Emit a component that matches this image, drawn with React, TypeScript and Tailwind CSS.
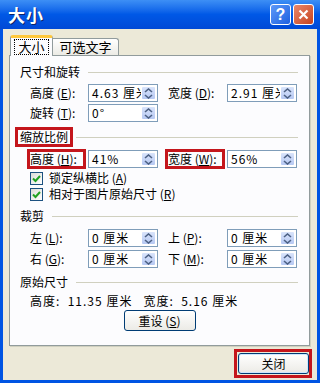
import type { ReactNode } from 'react'

const font = "font-['SimSun','Noto_Sans_CJK_SC',sans-serif]"

function Spin() {
  return (
    <div className="w-[15px] h-full rounded-[2px] border border-white bg-linear-to-b from-[#d9e4fb] to-[#b6c8f3] flex flex-col items-center justify-center gap-[1px]">
      <svg width="9" height="5" viewBox="0 0 9 5">
        <path d="M1 4 L4.5 1 L8 4" fill="none" stroke="#4d6185" strokeWidth="1.6" />
      </svg>
      <svg width="9" height="5" viewBox="0 0 9 5">
        <path d="M1 1 L4.5 4 L8 1" fill="none" stroke="#4d6185" strokeWidth="1.6" />
      </svg>
    </div>
  )
}

function Field({ value }: { value: string }) {
  return (
    <div className="w-[70px] h-[18px] border border-[#7f9db9] bg-white flex items-stretch p-[1px]">
      <div className="flex-1 min-w-0 overflow-hidden whitespace-pre pl-[2px] text-[12px] leading-[14px] tracking-[1px] text-black">
        {value}
      </div>
      <Spin />
    </div>
  )
}

function Label({ children, w, boxed }: { children: ReactNode; w: string; boxed?: boolean }) {
  return (
    <div className={`${w} relative text-[12px] leading-[18px] text-black whitespace-pre`}>
      {children}
      {boxed && (
        <span className="absolute -left-[3px] -top-[1px] right-[2px] -bottom-[1px] border-[3px] border-[#c4161c]" />
      )}
    </div>
  )
}

function Header({ text, boxed, mt }: { text: string; boxed?: boolean; mt: string }) {
  return (
    <div className={`${mt} h-[16px] flex items-center mr-[11px]`}>
      <div className="relative text-[12px] leading-[16px] text-black">
        {text}
        {boxed && (
          <span className="absolute -left-[5px] -top-[2px] -right-[5px] -bottom-[2px] border-[3px] border-[#c4161c]" />
        )}
      </div>
      <div className="flex-1 h-px bg-[#d0d0bf] ml-[8px]" />
    </div>
  )
}

function Row({ mt, l1, v1, l2, v2, boxed }: { mt: string; l1?: ReactNode; v1?: string; l2?: ReactNode; v2?: string; boxed?: boolean }) {
  return (
    <div className={`${mt} h-[18px] flex items-center pl-[10px]`}>
      <Label w="w-[58px]" boxed={boxed}>{l1}</Label>
      <Field value={v1 ?? ''} />
      {l2 && (
        <>
          <div className="w-[10px]" />
          <Label w="w-[59px]" boxed={boxed}>{l2}</Label>
          <Field value={v2 ?? ''} />
        </>
      )}
    </div>
  )
}

function Check({ mt, children }: { mt: string; children: ReactNode }) {
  return (
    <div className={`${mt} h-[16px] flex items-center pl-[10px] text-[12px] text-black`}>
      <div className="w-[13px] h-[13px] border border-[#1c5180] bg-linear-to-br from-[#dcdcd7] to-white flex items-center justify-center">
        <svg width="9" height="9" viewBox="0 0 9 9">
          <path d="M1 4.5 L3.5 7 L8 2" fill="none" stroke="#21a121" strokeWidth="2" />
        </svg>
      </div>
      <span className="ml-[6px] leading-[16px] whitespace-pre">{children}</span>
    </div>
  )
}

export default function App() {
  return (
    <div className={`w-[320px] h-[383px] flex flex-col bg-[#0054e3] ${font}`}>
      {/* title bar */}
      <div className="h-[29px] shrink-0 flex items-center bg-linear-to-b from-[#3d8ff5] via-[#0058e6] to-[#0049d6] pl-[8px] pr-[6px]">
        <span className="text-white font-bold text-[17px] tracking-[1px] [text-shadow:1px_1px_0_#0a246a]">大小</span>
        <div className="flex-1" />
        <div className="w-[21px] h-[21px] rounded-[3px] border border-white bg-linear-to-br from-[#5d9af8] to-[#1d5fe0] flex items-center justify-center text-white font-bold text-[16px] font-['Liberation_Sans',sans-serif]">
          ?
        </div>
        <div className="ml-[2px] w-[21px] h-[21px] rounded-[3px] border border-white bg-linear-to-br from-[#e9876a] to-[#c7421b] flex items-center justify-center">
          <svg width="11" height="11" viewBox="0 0 11 11">
            <path d="M1.5 1.5 L9.5 9.5 M9.5 1.5 L1.5 9.5" stroke="white" strokeWidth="2.2" />
          </svg>
        </div>
      </div>

      {/* body */}
      <div className="flex-1 mx-[3px] mb-[3px] bg-[#ece9d8] flex flex-col px-[6px]">
        {/* tabs */}
        <div className="mt-[5px] h-[21px] flex items-end pl-[1px]">
          <div className="w-[43px] h-[21px] relative z-10 -mb-px bg-[#fcfcfe] border-x border-[#919b9c] border-t-[3px] border-t-[#ffc83c] rounded-t-[3px] flex items-center justify-center">
            <span className="border border-dotted border-black px-[3px] text-[13px] leading-[14px] text-black">大小</span>
          </div>
          <div className="w-[66px] h-[17px] bg-linear-to-b from-white to-[#ecebe5] border-t border-r border-[#919b9c] rounded-tr-[3px] flex items-center justify-center text-[13px] text-black">
            可选文字
          </div>
        </div>

        {/* panel */}
        <div className="w-[301px] h-[291px] border border-[#919b9c] bg-[#fcfcfe] shadow-[1px_1px_0_#d0d0bf] pl-[10px] flex flex-col">
          <Header mt="mt-[8px]" text="尺寸和旋转" />
          <Row mt="mt-[4px]" l1={<>高度 (<u>E</u>):</>} v1="4.63 厘米" l2={<>宽度 (<u>D</u>):</>} v2="2.91 厘米" />
          <Row mt="mt-[2px]" l1={<>旋转 (<u>T</u>):</>} v1="0°" />

          <Header mt="mt-[7px]" text="缩放比例" boxed />
          <Row mt="mt-[5px]" l1={<>高度 (<u>H</u>):</>} v1="41%" l2={<>宽度 (<u>W</u>):</>} v2="56%" boxed />
          <Check mt="mt-[2px]">锁定纵横比 (<u>A</u>)</Check>
          <Check mt="mt-0">相对于图片原始尺寸 (<u>R</u>)</Check>

          <Header mt="mt-[6px]" text="裁剪" />
          <Row mt="mt-[5px]" l1={<>左 (<u>L</u>):</>} v1="0 厘米" l2={<>上 (<u>P</u>):</>} v2="0 厘米" />
          <Row mt="mt-[3px]" l1={<>右 (<u>G</u>):</>} v1="0 厘米" l2={<>下 (<u>M</u>):</>} v2="0 厘米" />

          <Header mt="mt-[6px]" text="原始尺寸" />
          <div className="mt-[4px] h-[14px] pl-[10px] text-[12px] leading-[14px] tracking-[1px] text-black whitespace-pre">
            高度:  11.35 厘米   宽度:  5.16 厘米
          </div>
          <div className="mt-[2px] flex justify-center pr-[10px]">
            <div className="w-[72px] h-[21px] rounded-[3px] border border-[#003c74] bg-linear-to-b from-white to-[#ecebe6] flex items-center justify-center text-[12px] text-black whitespace-pre">
              重设 (<u>S</u>)
            </div>
          </div>
        </div>

        {/* footer */}
        <div className="mt-[7px] flex justify-end pr-[2px]">
          <div className="relative w-[71px] h-[21px] rounded-[3px] border border-[#003c74] bg-linear-to-b from-white to-[#ecebe6] shadow-[inset_0_0_0_1px_#cee7ff] flex items-center justify-center text-[12px] text-black">
            关闭
            <span className="absolute -left-[5px] -top-[5px] -right-[4px] -bottom-[5px] border-[3px] border-[#c4161c]" />
          </div>
        </div>
      </div>
    </div>
  )
}
